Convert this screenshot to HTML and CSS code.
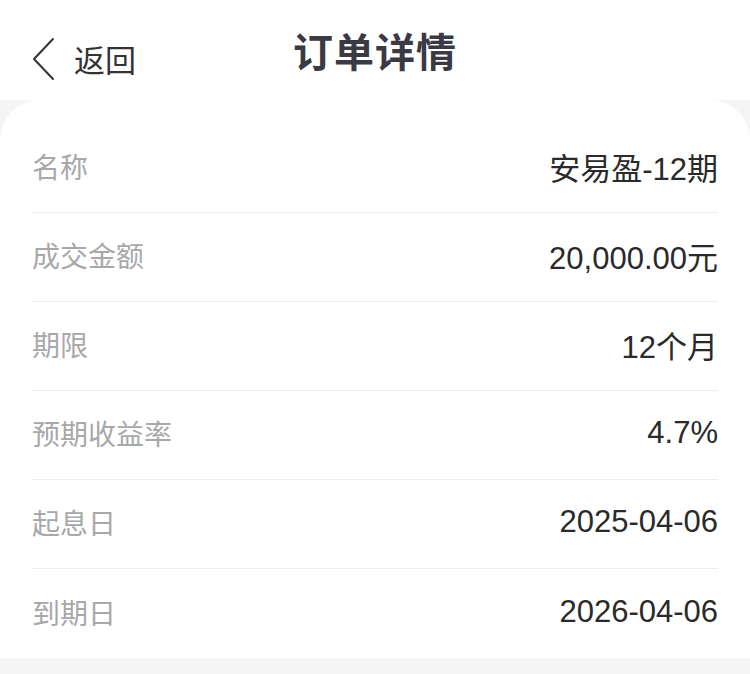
FILE: index.html
```html
<!DOCTYPE html>
<html lang="zh-CN">
<head>
  <meta charset="UTF-8" />
  <title>订单详情</title>
  <link rel="stylesheet" href="styles.css">
</head>
<body>
  <header class="nav">
    <a class="back" href="#">
      <svg class="chevron" width="26" height="44" viewBox="0 0 26 44">
        <path d="M22 2 L3 22 L22 42" fill="none" stroke="#333" stroke-width="2" stroke-linecap="round" stroke-linejoin="round"/>
      </svg>
      <span>返回</span>
    </a>
    <h1 class="title">订单详情</h1>
  </header>

  <main class="card">
    <div class="row"><span class="label">名称</span><span class="value">安易盈-12期</span></div>
    <div class="row"><span class="label">成交金额</span><span class="value">20,000.00元</span></div>
    <div class="row"><span class="label">期限</span><span class="value">12个月</span></div>
    <div class="row"><span class="label">预期收益率</span><span class="value">4.7%</span></div>
    <div class="row"><span class="label">起息日</span><span class="value">2025-04-06</span></div>
    <div class="row"><span class="label">到期日</span><span class="value">2026-04-06</span></div>
  </main>
</body>
</html>
```

FILE: styles.css
```css
body {
  margin: 0;
  background: #f5f5f6;
  font-family: "Noto Sans CJK SC", "Noto Sans", sans-serif;
  color: #333;
}
.nav {
  position: relative;
  height: 100px;
  background: #fff;
  display: flex;
  align-items: center;
  justify-content: center;
}
.back {
  position: absolute;
  left: 31px;
  top: 37px;
  display: flex;
  align-items: center;
  gap: 17px;
  color: #333;
  text-decoration: none;
  font-size: 31px;
}
.back span {
  line-height: 44px;
}
.title {
  margin: 0;
  font-size: 40px;
  font-weight: 600;
  color: #3b3a44;
  letter-spacing: 1px;
}
.card {
  background: #fff;
  border-radius: 40px 40px 0 0;
  padding: 24px 32px 0;
}
.row {
  height: 89px;
  display: flex;
  align-items: center;
  justify-content: space-between;
  border-bottom: 1px solid #eeeeee;
  box-sizing: border-box;
}
.row:last-child {
  border-bottom: none;
}
.label {
  font-size: 28px;
  color: #a8a8a8;
  margin-top: -4px;
}
.value {
  font-family: "Liberation Sans", "Noto Sans CJK SC", sans-serif;
  font-size: 31px;
  color: #2a2a2a;
  margin-top: -4px;
}
```
